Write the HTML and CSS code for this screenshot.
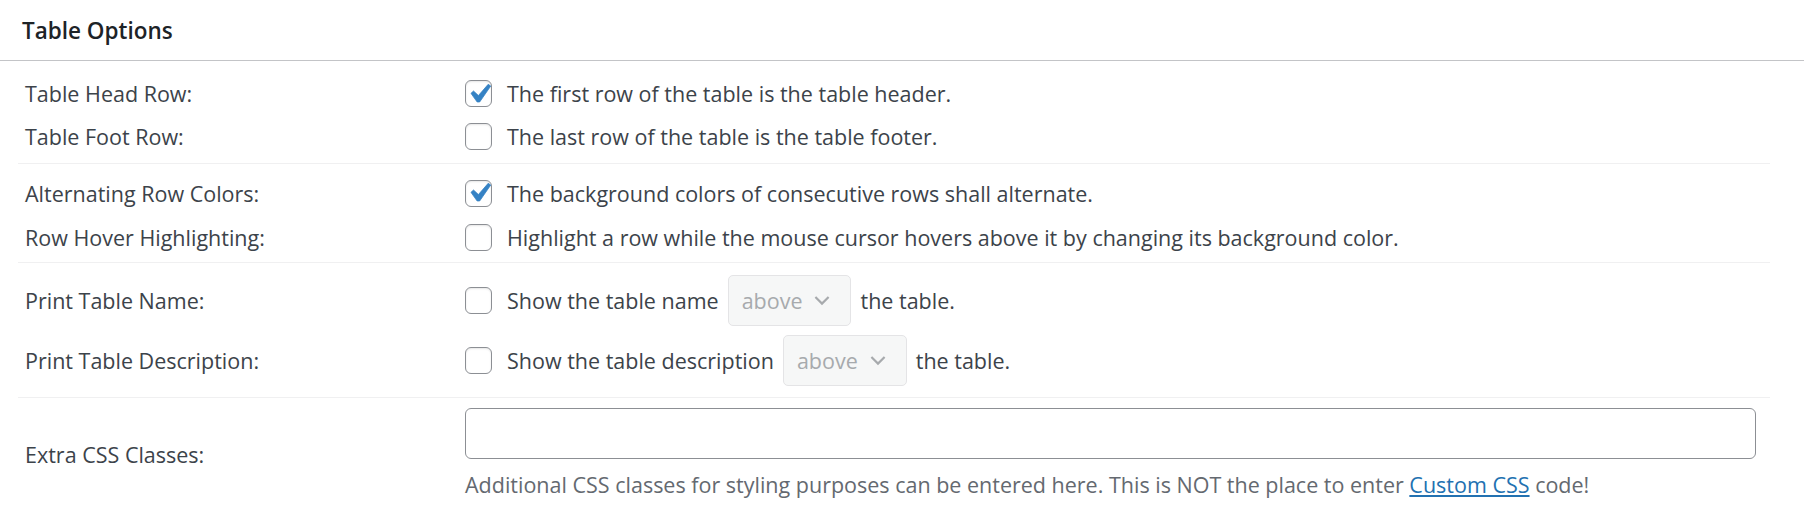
FILE: index.html
```html
<!DOCTYPE html>
<html lang="en">
<head>
  <meta charset="UTF-8">
  <meta name="viewport" content="width=device-width, initial-scale=1.0">
  <title>Table Options</title>
  <link rel="stylesheet" href="styles.css">
</head>
<body>

<div class="postbox">
  <div class="postbox-header">
    <h2>Table Options</h2>
  </div>

  <div class="inside">
    <div class="group group-first">
      <div class="row">
        <div class="label">Table Head Row:</div>
        <div class="field">
          <span class="check checked"><svg viewBox="0 0 20 20"><path d="M14.83 4.89l1.34.94-5.81 8.38H9.02L5.78 9.67l1.34-1.25 2.57 2.4z"/></svg></span>
          <span>The first row of the table is the table header.</span>
        </div>
      </div>
      <div class="row">
        <div class="label">Table Foot Row:</div>
        <div class="field">
          <span class="check"></span>
          <span>The last row of the table is the table footer.</span>
        </div>
      </div>
    </div>

    <div class="group group-second">
      <div class="row">
        <div class="label">Alternating Row Colors:</div>
        <div class="field">
          <span class="check checked"><svg viewBox="0 0 20 20"><path d="M14.83 4.89l1.34.94-5.81 8.38H9.02L5.78 9.67l1.34-1.25 2.57 2.4z"/></svg></span>
          <span>The background colors of consecutive rows shall alternate.</span>
        </div>
      </div>
      <div class="row">
        <div class="label">Row Hover Highlighting:</div>
        <div class="field">
          <span class="check"></span>
          <span>Highlight a row while the mouse cursor hovers above it by changing its background color.</span>
        </div>
      </div>
    </div>

    <div class="group group-print">
      <div class="row row-tall">
        <div class="label">Print Table Name:</div>
        <div class="field">
          <span class="check"></span>
          <span>Show the table name</span>
          <span class="select">above <svg viewBox="0 0 20 20"><polyline points="4.5,7.5 10,13 15.5,7.5"/></svg></span>
          <span>the table.</span>
        </div>
      </div>
      <div class="row row-tall">
        <div class="label">Print Table Description:</div>
        <div class="field">
          <span class="check"></span>
          <span>Show the table description</span>
          <span class="select">above <svg viewBox="0 0 20 20"><polyline points="4.5,7.5 10,13 15.5,7.5"/></svg></span>
          <span>the table.</span>
        </div>
      </div>
    </div>

    <div class="group group-extra">
      <div class="row">
        <div class="label">Extra CSS Classes:</div>
        <div class="field-block">
          <input type="text" class="text-input">
          <p class="help">Additional CSS classes for styling purposes can be entered here. This is NOT the place to enter <a href="#">Custom CSS</a> code!</p>
        </div>
      </div>
    </div>
  </div>
</div>

</body>
</html>
```

FILE: styles.css
```css
body {
  margin: 0;
  padding: 0;
  background-color: #fff;
  font-family: 'Open Sans', 'Noto Sans', sans-serif;
  font-size: 21.5px;
  color: #3c434a;
}

.postbox-header {
  height: 60px;
  border-bottom: 1px solid #c3c4c7;
  display: flex;
  align-items: center;
}

.postbox-header h2 {
  margin: 0 0 0 22px;
  font-size: 22.5px;
  font-weight: 600;
  color: #1d2327;
}

.inside {
  padding: 0 34px 0 18px;
}

.group {
  border-top: 1px solid #f0f0f1;
}

.group-first {
  border-top: none;
  padding: 11px 0 5px;
}

.group-second {
  padding: 7px 0 3px;
}

.group-print {
  padding: 7px 0 7px;
}

.group-extra {
  padding: 10px 0 25px;
}

.row {
  display: grid;
  grid-template-columns: 447px 1fr;
  align-items: center;
  min-height: 43px;
}

.group-second .row {
  min-height: 44px;
}

.row-tall {
  min-height: 60px;
}

.label {
  padding-left: 7px;
}

.field {
  display: flex;
  align-items: center;
  gap: 9px;
}

.check {
  width: 27px;
  height: 27px;
  box-sizing: border-box;
  border: 1px solid #8c8f94;
  border-radius: 6px;
  box-shadow: inset 0 1px 2px rgba(0, 0, 0, 0.1);
  margin-right: 6px;
  display: flex;
  align-items: center;
  justify-content: center;
}

.check svg {
  width: 38px;
  height: 38px;
  fill: #3582c4;
  stroke: #3582c4;
  stroke-width: 0.4;
  flex-shrink: 0;
}

.select {
  display: inline-flex;
  align-items: center;
  gap: 8px;
  height: 51px;
  box-sizing: border-box;
  padding: 0 16px 0 13px;
  background-color: #f6f7f7;
  border: 1px solid #e4e4e6;
  border-radius: 5px;
  color: #a7aaad;
}

.select svg {
  width: 24px;
  height: 24px;
  fill: none;
  stroke: #a7aaad;
  stroke-width: 1.8;
}

.field-block {
  padding-right: 14px;
}

.text-input {
  display: block;
  width: 100%;
  height: 51px;
  box-sizing: border-box;
  border: 1px solid #8c8f94;
  border-radius: 6px;
  margin: 0;
  font-size: 20px;
}

.help {
  margin: 11px 0 0;
  line-height: 30px;
  color: #646970;
}

.help a {
  color: #2271b1;
}
```
